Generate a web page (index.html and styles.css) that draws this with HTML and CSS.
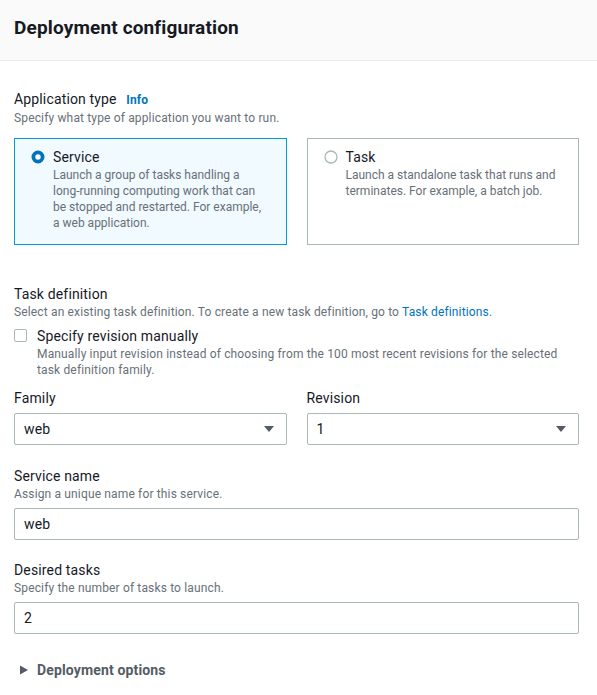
FILE: index.html
```html
<!DOCTYPE html>
<html lang="en">
<head>
<meta charset="utf-8">
<title>Deployment configuration</title>
<link rel="stylesheet" href="styles.css">
</head>
<body>
<div class="container">
  <div class="header">
    <h2 class="title">Deployment configuration</h2>
  </div>
  <div class="content">
    <div class="field app-type">
      <div class="label">Application type <a class="info" href="#">Info</a></div>
      <div class="desc">Specify what type of application you want to run.</div>
      <div class="tiles">
        <div class="tile selected">
          <div class="tile-head">
            <svg class="radio" width="14" height="14" viewBox="0 0 14 14"><circle cx="7" cy="7" r="4.6" fill="#fff" stroke="#0073bb" stroke-width="3.8"/></svg>
            <span class="tile-label">Service</span>
          </div>
          <div class="tile-desc">Launch a group of tasks handling a long-running computing work that can be stopped and restarted. For example, a web application.</div>
        </div>
        <div class="tile">
          <div class="tile-head">
            <svg class="radio" width="14" height="14" viewBox="0 0 14 14"><circle cx="7" cy="7" r="6" fill="#fff" stroke="#aab7b8" stroke-width="1.3"/></svg>
            <span class="tile-label">Task</span>
          </div>
          <div class="tile-desc">Launch a standalone task that runs and terminates. For example, a batch job.</div>
        </div>
      </div>
    </div>

    <div class="field task-def">
      <div class="label">Task definition</div>
      <div class="desc">Select an existing task definition. To create a new task definition, go to <a class="link" href="#">Task definitions</a>.</div>
      <div class="check-row">
        <span class="checkbox"></span>
        <div class="check-body">
          <div class="check-label">Specify revision manually</div>
          <div class="desc">Manually input revision instead of choosing from the 100 most recent revisions for the selected task definition family.</div>
        </div>
      </div>
      <div class="cols">
        <div class="col">
          <div class="label">Family</div>
          <div class="select"><span>web</span><svg class="caret" width="12" height="8" viewBox="0 0 12 8"><path d="M1 1h10L6 7z" fill="#545b64"/></svg></div>
        </div>
        <div class="col">
          <div class="label">Revision</div>
          <div class="select"><span>1</span><svg class="caret" width="12" height="8" viewBox="0 0 12 8"><path d="M1 1h10L6 7z" fill="#545b64"/></svg></div>
        </div>
      </div>
    </div>

    <div class="field">
      <div class="label">Service name</div>
      <div class="desc">Assign a unique name for this service.</div>
      <div class="input">web</div>
    </div>

    <div class="field desired">
      <div class="label">Desired tasks</div>
      <div class="desc">Specify the number of tasks to launch.</div>
      <div class="input">2</div>
    </div>

    <div class="expander">
      <svg class="expand-caret" width="10" height="10" viewBox="0 0 10 10"><path d="M1 0.5L9 5L1 9.5z" fill="#545b64"/></svg>
      <span>Deployment options</span>
    </div>
  </div>
</div>
</body>
</html>
```

FILE: styles.css
```css
* { box-sizing: border-box; }
html, body { margin: 0; padding: 0; background: #fff; }
body {
  font-family: Roboto, "Liberation Sans", Arial, sans-serif;
  color: #16191f;
  font-size: 14px;
  line-height: 20px;
  letter-spacing: 0.15px;
}
.header {
  background: #fafafa;
  border-bottom: 1px solid #eaeded;
  height: 61px;
  padding: 17px 14px 0;
}
.title {
  margin: 0;
  font-size: 19px;
  line-height: 22px;
  font-weight: 700;
  letter-spacing: 0.15px;
  color: #16191f;
}
.content {
  padding: 28px 18px 20px 14px;
}
.label {
  font-size: 14px;
  line-height: 20px;
  color: #16191f;
}
.info {
  color: #0073bb;
  font-weight: 700;
  font-size: 12px;
  text-decoration: none;
  margin-left: 6px;
}
.desc {
  font-size: 12px;
  line-height: 16px;
  color: #687078;
}
.link { color: #0073bb; text-decoration: none; }
.tiles {
  display: grid;
  grid-template-columns: 1fr 1fr;
  column-gap: 20px;
  margin-top: 12px;
}
.tile {
  border: 1px solid #aab7b8;
  padding: 8px 19px 13px 16px;
  background: #fff;
}
.tile.selected {
  border-color: #00a1c9;
  background: #f1faff;
}
.tile-head {
  display: flex;
  align-items: center;
  gap: 8px;
}
.radio { flex: none; }
.tile-label { font-size: 14px; line-height: 20px; }
.tile-desc {
  padding-left: 22px;
  font-size: 12px;
  line-height: 16px;
  letter-spacing: 0;
  color: #687078;
}
.field { margin-top: 21px; }
.app-type { margin-top: 0; }
.task-def { margin-top: 39px; }
.desired { margin-top: 20px; }
.check-row {
  display: flex;
  gap: 10px;
  margin-top: 6px;
}
.checkbox {
  flex: none;
  width: 13px;
  height: 13px;
  border: 1.5px solid #aab7b8;
  border-radius: 2px;
  margin-top: 3px;
  background: #fff;
}
.check-label { font-size: 14px; line-height: 20px; }
.cols {
  display: grid;
  grid-template-columns: 1fr 1fr;
  column-gap: 20px;
  margin-top: 10px;
}
.select, .input {
  margin-top: 5px;
  height: 32px;
  border: 1px solid #aab7b8;
  border-radius: 2px;
  padding: 0 9px;
  display: flex;
  align-items: center;
  font-size: 14px;
  color: #16191f;
  background: #fff;
}
.select { justify-content: space-between; padding-right: 11px; }
.input { margin-top: 6px; }
.expander {
  margin-top: 26px;
  display: flex;
  align-items: center;
  gap: 8px;
  padding-left: 5px;
  font-weight: 700;
  font-size: 14px;
  color: #545b64;
}
.expand-caret { flex: none; }
```
